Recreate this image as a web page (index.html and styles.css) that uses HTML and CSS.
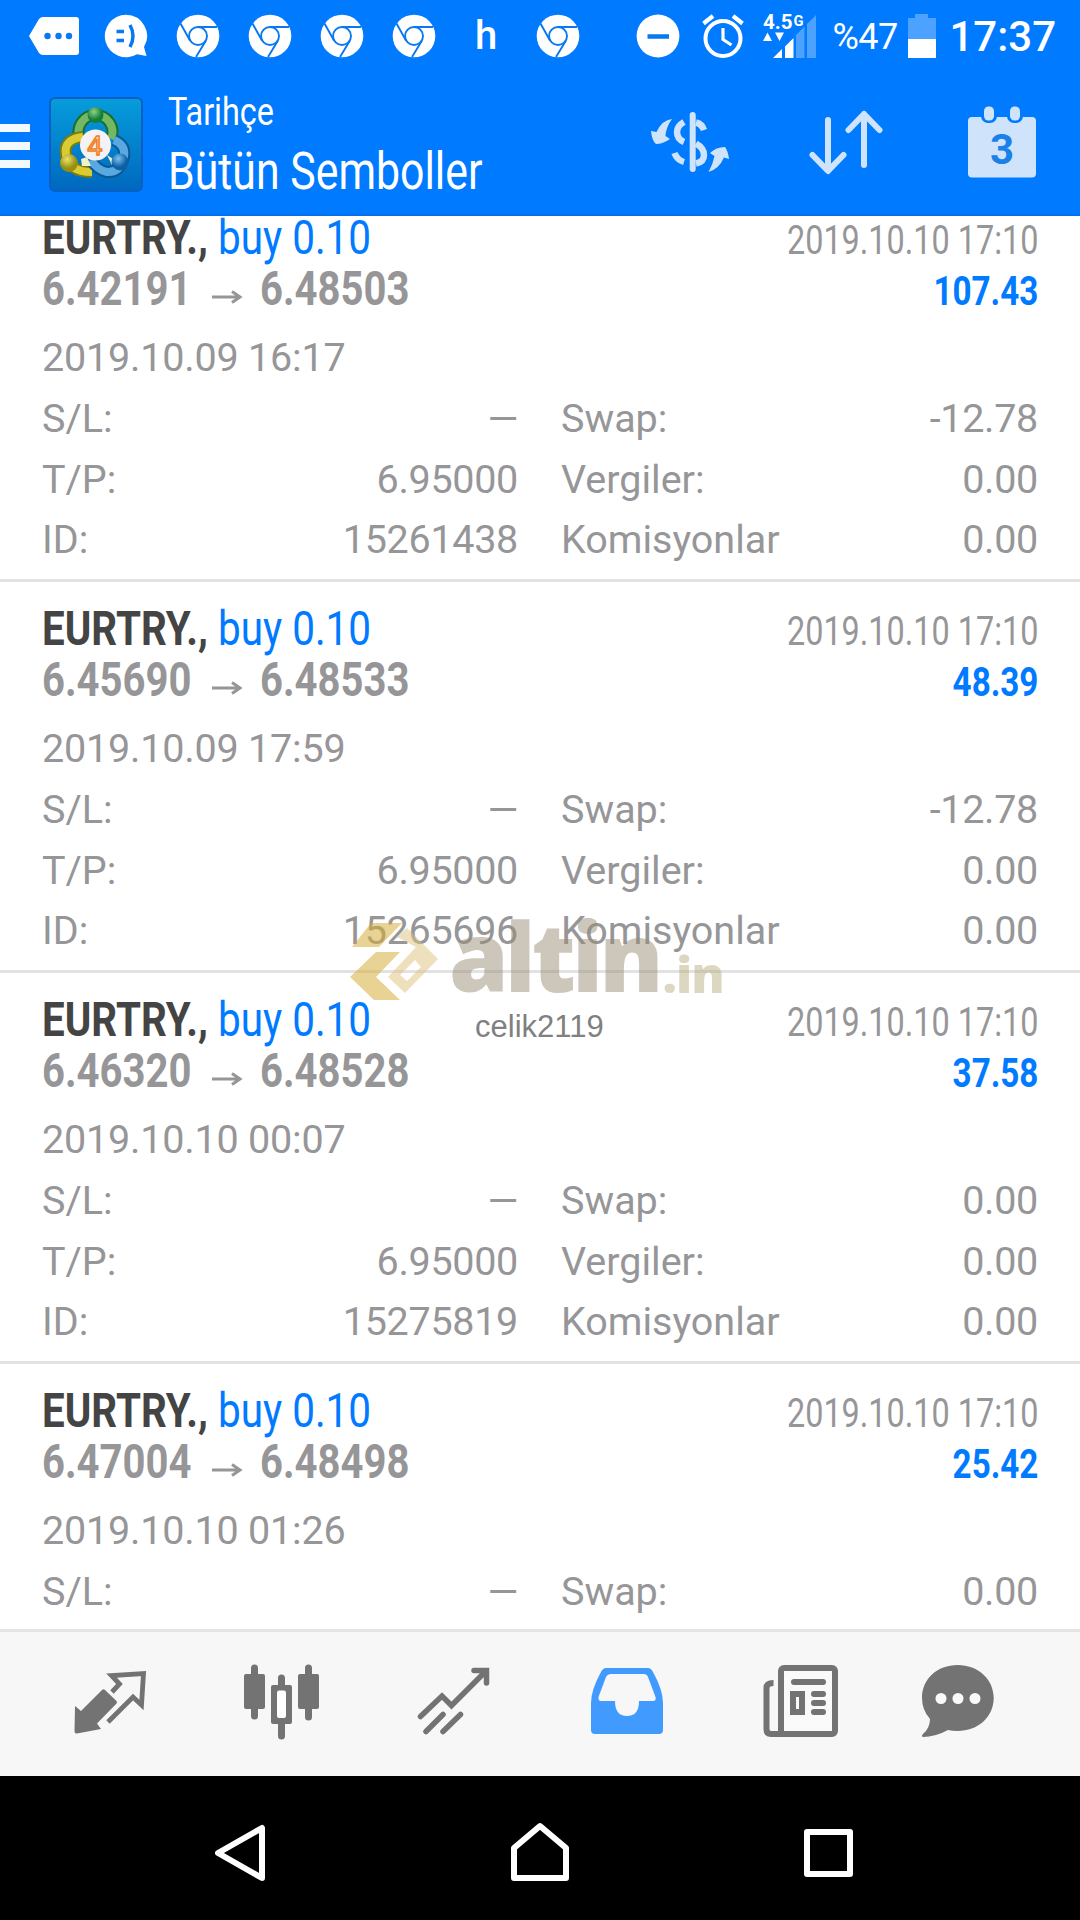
FILE: index.html
```
<!DOCTYPE html>
<html lang="tr">
<head>
    <meta charset="UTF-8">
    <meta name="viewport" content="width=device-width, initial-scale=1.0">
    <title>Tarihçe</title>
    <link rel="stylesheet" href="styles.css">
</head>
<body>

    <!-- Shared shapes -->
    <svg width="0" height="0" class="defs">
        <symbol id="chrome" viewBox="0 0 44 44">
            <circle cx="22" cy="22" r="21.3" fill="#fff"/>
            <g fill="none" stroke="#0a78f0" stroke-width="1.9">
                <circle cx="22" cy="22" r="9"/>
                <path d="M22 13H41M14 26.500L4.500 9.500M30 26.500L20 43"/>
            </g>
        </symbol>
        <symbol id="arrow" viewBox="0 0 32 16">
            <path d="M1 8H29M21 2.500L29 8L21 13.500" fill="none" stroke="#969698" stroke-width="3"/>
        </symbol>
    </svg>

    <div class="status-bar">
        <div class="notifications">
            <svg class="tag" width="50" height="44" viewBox="0 0 50 44">
                <path d="M0 22L10 5Q11.500 3 14 3H47Q50 3 50 6V38Q50 41 47 41H14Q11.500 41 10 39Z" fill="#fff"/>
                <g fill="#0a78f0"><circle cx="18.500" cy="22" r="3.200"/><circle cx="29.500" cy="22" r="3.200"/><circle cx="40" cy="22" r="3.200"/></g>
            </svg>
            <svg width="44" height="44" viewBox="0 0 44 44">
                <path d="M22 .7A21.300 21.300 0 1 0 33 40.300L42.500 42L40 33A21.300 21.300 0 0 0 22 .7Z" fill="#fff"/>
                <path d="M12.500 17.500H20M12.500 26.500H20M26 11Q32 22 26 33" fill="none" stroke="#0a78f0" stroke-width="3.500"/>
            </svg>
            <svg width="44" height="44"><use href="#chrome"/></svg>
            <svg width="44" height="44"><use href="#chrome"/></svg>
            <svg width="44" height="44"><use href="#chrome"/></svg>
            <svg width="44" height="44"><use href="#chrome"/></svg>
            <span class="letter">h</span>
            <svg width="44" height="44"><use href="#chrome"/></svg>
        </div>
        <div class="system">
            <svg width="44" height="44" viewBox="0 0 44 44">
                <circle cx="22" cy="22" r="21.400" fill="#fff"/>
                <path d="M11.500 22.500H33" stroke="#0a78f0" stroke-width="4.500"/>
            </svg>
            <svg class="alarm" width="44" height="44" viewBox="0 0 44 44">
                <g fill="none" stroke="#fff">
                    <circle cx="22" cy="24.500" r="17.500" stroke-width="4"/>
                    <path d="M22 14V25.500L30.500 31" stroke-width="3.200"/>
                    <path d="M2.500 9.500L12 2M41.500 9.500L32 2" stroke-width="4.200"/>
                </g>
            </svg>
            <div class="signal">
                <span class="net">4.5<small>G</small></span>
                <svg width="54" height="46" viewBox="764 12 54 46">
                    <path d="M764 40L768.500 31.500L773 40ZM776 31.500H785L780.500 40Z" fill="#fff"/>
                    <path d="M774 57L783 48V57ZM786 45.500L794.500 37V57H786Z" fill="#fff"/>
                    <path d="M797 34L805.500 25.500V57H797ZM808 23L817 14V57H808Z" fill="#4da2ff"/>
                </svg>
            </div>
            <span class="percent">%47</span>
            <svg width="28" height="44" viewBox="0 0 28 44">
                <path d="M7 0H20V4H28V25H0V4H7Z" fill="#4da2ff"/>
                <path d="M0 25H28V44H0Z" fill="#fff"/>
            </svg>
            <span class="clock">17:37</span>
        </div>
    </div>

    <header class="header">
        <div class="menu"><i></i><i></i><i></i></div>
        <svg class="logo" width="94" height="96" viewBox="0 0 94 96">
            <defs>
                <linearGradient id="sky" x1="0" y1="0" x2="0" y2="1"><stop offset="0" stop-color="#069ddc"/><stop offset="1" stop-color="#0068be"/></linearGradient>
                <radialGradient id="green" cx=".4" cy=".3"><stop offset="0" stop-color="#8fd08a"/><stop offset="1" stop-color="#13803a"/></radialGradient>
                <radialGradient id="gold" cx=".4" cy=".3"><stop offset="0" stop-color="#eee36b"/><stop offset="1" stop-color="#968f12"/></radialGradient>
                <radialGradient id="blue" cx=".4" cy=".3"><stop offset="0" stop-color="#7cc3ee"/><stop offset="1" stop-color="#0e5fa6"/></radialGradient>
            </defs>
            <rect x="1" y="1" width="92" height="93" rx="5" fill="url(#sky)" stroke="#0a5fc4" stroke-width="2"/>
            <g fill="none">
                <path d="M31 42A17 17 0 1 1 62 42" stroke="#186f30" stroke-width="12"/>
                <path d="M31 42A17 17 0 1 1 62 42" stroke="#74b864" stroke-width="8"/>
                <path d="M34 40Q14 42 17 58Q20 75 43 75" stroke="#7c7a12" stroke-width="12"/>
                <path d="M34 40Q14 42 17 58Q20 75 43 75" stroke="#d9cc31" stroke-width="8"/>
                <path d="M65 43Q77 48 75 60Q71 76 58 75Q48 73 42 63" stroke="#0e5795" stroke-width="12"/>
                <path d="M65 43Q77 48 75 60Q71 76 58 75Q48 73 42 63" stroke="#58a9df" stroke-width="8"/>
            </g>
            <path d="M32 62L38 60L42 69H33ZM58 58L64 62L63 68Z" fill="#f3f2c5"/>
            <circle cx="46.500" cy="18" r="8" fill="url(#green)"/>
            <circle cx="20" cy="66" r="9" fill="url(#gold)"/>
            <circle cx="71" cy="65" r="8.500" fill="url(#blue)"/>
            <circle cx="46.500" cy="48" r="15.500" fill="#f4f2f4"/>
            <text x="46" y="57.500" class="logo-number">4</text>
        </svg>
        <div class="titles">
            <span class="title-small">Tarihçe</span>
            <span class="title-big">Bütün Semboller</span>
        </div>
        <div class="actions">
            <svg width="80" height="64" viewBox="650 110 80 64">
                <path d="M692.700 115V169" stroke="#cfe4fb" stroke-width="6" stroke-linecap="round"/>
                <path d="M684 122Q677 126 677 132Q677 139 684 142M696 122.500Q702 124 704 130M696 143.500Q704 148 704 155Q704 162 696 163.500M674.500 153Q677 160 684 162" fill="none" stroke="#cfe4fb" stroke-width="6.500"/>
                <path d="M672 119Q662 120 656.500 132L651 131Q652 141 656 144Q663 144 670 139L665.500 136Q666 127 672 119ZM708.500 172Q713 164 714.500 156L710 153Q716 147 725 147Q728 151 729 159L724 157.500Q719 169 708.500 172Z" fill="#cfe4fb"/>
            </svg>
            <svg class="sort" width="76" height="66" viewBox="808 110 76 66">
                <path d="M828 121V171M812.500 156L828 172L843.500 156M864 166V115M848.500 131L864 115L879.500 131" fill="none" stroke="#cfe4fb" stroke-width="6" stroke-linecap="round" stroke-linejoin="round"/>
            </svg>
            <svg width="68" height="72" viewBox="968 107 68 72">
                <rect x="968" y="118" width="68" height="60.500" rx="4" fill="#cfe4fb"/>
                <rect x="981" y="104" width="16" height="20" rx="7" fill="#007aff"/>
                <rect x="1007" y="104" width="16" height="20" rx="7" fill="#007aff"/>
                <rect x="984" y="107.500" width="10" height="14" rx="4.500" fill="#cfe4fb"/>
                <rect x="1010" y="107.500" width="10" height="14" rx="4.500" fill="#cfe4fb"/>
                <text x="1002" y="165" class="day">3</text>
            </svg>
        </div>
    </header>

    <main class="history">
        <section class="deal">
            <div class="line"><b class="symbol">EURTRY.,</b><span class="type">buy 0.10</span><span class="closed">2019.10.10 17:10</span></div>
            <div class="line"><b class="price">6.42191</b><svg class="arrow" width="32" height="16"><use href="#arrow"/></svg><b class="price">6.48503</b><b class="profit">107.43</b></div>
            <div class="opened">2019.10.09 16:17</div>
            <div class="details">
                <span>S/L:</span><span>—</span><span>Swap:</span><span>-12.78</span>
                <span>T/P:</span><span>6.95000</span><span>Vergiler:</span><span>0.00</span>
                <span>ID:</span><span>15261438</span><span>Komisyonlar</span><span>0.00</span>
            </div>
        </section>
        <section class="deal">
            <div class="line"><b class="symbol">EURTRY.,</b><span class="type">buy 0.10</span><span class="closed">2019.10.10 17:10</span></div>
            <div class="line"><b class="price">6.45690</b><svg class="arrow" width="32" height="16"><use href="#arrow"/></svg><b class="price">6.48533</b><b class="profit">48.39</b></div>
            <div class="opened">2019.10.09 17:59</div>
            <div class="details">
                <span>S/L:</span><span>—</span><span>Swap:</span><span>-12.78</span>
                <span>T/P:</span><span>6.95000</span><span>Vergiler:</span><span>0.00</span>
                <span>ID:</span><span>15265696</span><span>Komisyonlar</span><span>0.00</span>
            </div>
        </section>
        <section class="deal">
            <div class="line"><b class="symbol">EURTRY.,</b><span class="type">buy 0.10</span><span class="closed">2019.10.10 17:10</span></div>
            <div class="line"><b class="price">6.46320</b><svg class="arrow" width="32" height="16"><use href="#arrow"/></svg><b class="price">6.48528</b><b class="profit">37.58</b></div>
            <div class="opened">2019.10.10 00:07</div>
            <div class="details">
                <span>S/L:</span><span>—</span><span>Swap:</span><span>0.00</span>
                <span>T/P:</span><span>6.95000</span><span>Vergiler:</span><span>0.00</span>
                <span>ID:</span><span>15275819</span><span>Komisyonlar</span><span>0.00</span>
            </div>
        </section>
        <section class="deal">
            <div class="line"><b class="symbol">EURTRY.,</b><span class="type">buy 0.10</span><span class="closed">2019.10.10 17:10</span></div>
            <div class="line"><b class="price">6.47004</b><svg class="arrow" width="32" height="16"><use href="#arrow"/></svg><b class="price">6.48498</b><b class="profit">25.42</b></div>
            <div class="opened">2019.10.10 01:26</div>
            <div class="details">
                <span>S/L:</span><span>—</span><span>Swap:</span><span>0.00</span>
            </div>
        </section>
    </main>

    <!-- Watermark over the list -->
    <div class="watermark">
        <div class="brand">
            <svg width="90" height="80" viewBox="350 922 90 80">
                <path d="M352 947L371 923H402L379 947ZM376 952H400L376 977L400 1000H374L350 977Z" fill="#d6ae3c" fill-opacity=".55"/>
                <path fill-rule="evenodd" d="M407 928L438 959L405 993L388 977L416 947L397 937ZM400 975L407 981L421 967L415 960Z" fill="#dfc27c" fill-opacity=".5"/>
            </svg>
            <span class="brand-name">altin</span><span class="brand-tld">.in</span>
        </div>
        <span class="user">celik2119</span>
    </div>

    <nav class="tabs">
        <svg width="90" height="90" viewBox="65 1658 90 90">
            <path d="M75 1706L81 1711L102 1690Q103.500 1688.500 105 1690L116.500 1701Q117.500 1702.500 116.500 1703.500L97 1723.500L101 1729L77 1733.500Q74.500 1734 74.500 1731Z" fill="#737373"/>
            <path d="M112 1692L119.500 1684L111.500 1675.500L143.500 1673.500L141.500 1705L133 1697L108 1722" fill="none" stroke="#737373" stroke-width="4.800"/>
        </svg>
        <svg width="90" height="90" viewBox="237 1658 90 90">
            <path d="M254.500 1668V1716M281.500 1678V1736M308.500 1668V1717" stroke="#737373" stroke-width="7" stroke-linecap="round"/>
            <rect x="244" y="1674" width="21" height="35" rx="2" fill="#737373"/>
            <rect x="298" y="1674" width="21" height="35" rx="2" fill="#737373"/>
            <rect x="271" y="1685" width="21" height="39" rx="2" fill="#737373"/>
            <rect x="277" y="1690.500" width="9" height="27.500" rx="2" fill="#fff"/>
        </svg>
        <svg width="90" height="90" viewBox="409 1658 90 90">
            <path d="M420.500 1716.500L442 1696L451.500 1705.500L485 1672M474 1670.500H486.500V1683M426 1731.500L443 1714.500M443 1731.500L460.500 1714.500" fill="none" stroke="#737373" stroke-width="5.500" stroke-linecap="round"/>
        </svg>
        <svg width="90" height="90" viewBox="582 1658 90 90">
            <path fill-rule="evenodd" d="M606 1668H648Q651 1668 653 1672Q663 1690 663 1703V1730Q663 1734 659 1734H595Q591 1734 591 1730V1703Q591 1690 601 1672Q603 1668 606 1668ZM611 1674Q607.500 1674 606 1677L598.500 1697Q598 1701 601 1701H615Q615 1716 627 1716Q639 1716 639 1701H653Q656.500 1701 655.500 1697L648 1677Q647 1674 643.500 1674Z" fill="#419bff"/>
        </svg>
        <svg width="90" height="90" viewBox="755 1658 90 90">
            <rect x="781" y="1668" width="54" height="66" rx="3" fill="#fafafa"/>
            <g fill="none" stroke="#737373" stroke-width="6">
                <rect x="781" y="1668" width="54" height="66" rx="3"/>
                <path d="M773.500 1683Q766.500 1683 766.500 1688V1729Q766.500 1734 771 1734H785"/>
                <path d="M794 1682H823M814 1694H823M814 1703H823M814 1712H823" stroke-linecap="round"/>
                <rect x="793" y="1694" width="9" height="18"/>
            </g>
        </svg>
        <svg width="90" height="90" viewBox="913 1658 90 90">
            <path d="M957.700 1665C978 1665 993.700 1679 993.700 1698C993.700 1717 978 1731 957.700 1731Q952 1731 948 1730Q935 1737 923 1737Q921 1736 923 1734Q930 1728 930 1719Q922 1710 922 1698C922 1679 937 1665 957.700 1665Z" fill="#737373"/>
            <g fill="#fafafa"><circle cx="941" cy="1698.500" r="5.500"/><circle cx="958" cy="1698.500" r="5.500"/><circle cx="975" cy="1698.500" r="5.500"/></g>
        </svg>
    </nav>

    <div class="nav-buttons">
        <svg width="50" height="64" viewBox="215 1821 50 64"><path d="M218 1853L262 1828V1878Z"/></svg>
        <svg class="home" width="60" height="64" viewBox="510 1821 60 64"><path d="M514 1878V1848L540 1826L566 1848V1878Z"/></svg>
        <svg width="50" height="64" viewBox="804 1821 50 64"><path d="M807 1832H850V1874H807Z"/></svg>
    </div>

</body>
</html>
```
FILE: styles.css
```
* {
    margin: 0;
    padding: 0;
    box-sizing: border-box;
}

body {
    width: 1080px;
    height: 1920px;
    overflow: hidden;
    position: relative;
    display: flex;
    flex-direction: column;
    font-family: Roboto, sans-serif;
    background-color: #fff;
}

svg {
    display: block;
    flex: none;
}

.defs {
    position: absolute;
}

/* Status bar */
.status-bar {
    height: 72px;
    flex: none;
    display: flex;
    justify-content: space-between;
    align-items: center;
    padding: 0 24px 0 29px;
    background-color: #007aff;
    color: #fff;
}

.notifications,
.system {
    display: flex;
    align-items: center;
}

.notifications {
    gap: 28px;
}

.notifications .tag {
    margin-right: -3px;
}

.letter {
    width: 44px;
    font-size: 40px;
    font-weight: 500;
    line-height: 46px;
    text-align: center;
}

.alarm {
    margin: 0 18px 0 21px;
}

.signal {
    position: relative;
    margin-right: 15px;
}

.net {
    position: absolute;
    left: 0;
    top: -2px;
    font-size: 21px;
    line-height: 20px;
    font-weight: bold;
    transform: scaleX(0.98);
    transform-origin: left;
    white-space: nowrap;
}

.net small {
    font-size: 15px;
    margin-left: 1px;
    vertical-align: 3px;
}

.percent {
    width: 76px;
    font-size: 36px;
    line-height: 44px;
    padding-top: 2px;
    letter-spacing: -0.5px;
}

.clock {
    margin-left: 13px;
    padding-top: 2px;
    font-size: 42px;
    font-weight: 500;
    line-height: 48px;
}

/* Header */
.header {
    height: 144px;
    flex: none;
    display: flex;
    background-color: #007aff;
    border-bottom: 2px solid #0070ee;
    color: #fff;
}

.menu {
    width: 30px;
    margin: 52px 19px 0 0;
}

.menu i {
    display: block;
    height: 8px;
    margin-bottom: 10px;
    background-color: #f4f9ff;
}

.logo {
    margin-top: 25px;
}

.logo-number {
    font: 27px "Liberation Sans", sans-serif;
    fill: #fff0d8;
    stroke: #f08020;
    stroke-width: 1.6px;
    text-anchor: middle;
}

.titles {
    width: 482px;
    padding: 10px 0 0 25px;
    white-space: nowrap;
}

.titles span {
    display: block;
    transform-origin: left;
}

.title-small {
    font-size: 39px;
    line-height: 60px;
    transform: scaleX(0.83);
}

.title-big {
    font-size: 51px;
    line-height: 60px;
    transform: scaleX(0.84);
}

.actions {
    flex: 1;
    display: flex;
    justify-content: space-between;
    align-items: center;
    padding: 0 44px 2px 25px;
}

.sort {
    margin-right: 6px;
}

.day {
    font: bold 42px Roboto, sans-serif;
    fill: #1a80ea;
    text-anchor: middle;
}

/* Deals list, scrolled a little under the header */
.history {
    height: 1413px;
    flex: none;
    overflow: hidden;
}

.deal {
    height: 391px;
    padding: 21px 42px 0;
    border-bottom: 3px solid #e2e2e3;
    color: #969698;
}

.deal:first-child {
    margin-top: -25px;
}

.line {
    display: flex;
    align-items: baseline;
    height: 51px;
    font-size: 48px;
    line-height: 51px;
    white-space: nowrap;
}

.symbol {
    width: 176px;
    color: #444;
    transform: scaleX(0.84);
    transform-origin: left;
}

.type {
    color: #007aff;
    transform: scaleX(0.843);
    transform-origin: left;
}

.price {
    width: 169px;
    transform: scaleX(0.834);
    transform-origin: left;
}

.arrow {
    margin-right: 17px;
}

.closed,
.profit {
    margin-left: auto;
    font-size: 40px;
    transform-origin: right;
}

.closed {
    transform: scaleX(0.81);
}

.profit {
    color: #007aff;
    transform: scaleX(0.83);
}

.opened {
    margin-top: 13px;
    font-size: 39.5px;
    line-height: 62px;
    letter-spacing: -0.2px;
}

.details {
    display: grid;
    grid-template-columns: 126px 350px 180px 1fr;
    font-size: 39.5px;
    line-height: 60.6px;
}

.details span:nth-child(even) {
    text-align: right;
    letter-spacing: -0.3px;
}

.details span:nth-child(4n + 3) {
    padding-left: 43px;
    white-space: nowrap;
}

/* Watermark */
.watermark {
    position: absolute;
    left: 350px;
    top: 900px;
    width: 390px;
}

.brand {
    display: flex;
    align-items: flex-end;
    height: 102px;
    font-family: "Open Sans", sans-serif;
    font-weight: 800;
}

.brand-name {
    margin-left: 9px;
    margin-right: 3px;
    font-size: 96px;
    line-height: 95px;
    letter-spacing: -4px;
    color: rgba(150, 137, 112, 0.48);
}

.brand-tld {
    font-size: 50px;
    line-height: 56px;
    letter-spacing: -1px;
    color: rgba(176, 166, 115, 0.45);
}

.user {
    display: block;
    margin: 3px 0 0 125px;
    font: 31px/44px "Liberation Sans", sans-serif;
    color: #808080;
}

/* Bottom tabs */
.tabs {
    height: 147px;
    flex: none;
    display: grid;
    grid-template-columns: 172px 172px 173px 173px 158px 90px;
    padding: 26px 0 0 65px;
    background-color: #f7f7f7;
    border-top: 3px solid #e4e4e4;
}

.nav-buttons {
    flex: 1;
    display: flex;
    justify-content: space-between;
    padding: 45px 226px 0 215px;
    background-color: #000;
}

.home {
    margin-left: 10px;
}

.nav-buttons path {
    fill: none;
    stroke: #fff;
    stroke-width: 6;
    stroke-linejoin: round;
}
```
